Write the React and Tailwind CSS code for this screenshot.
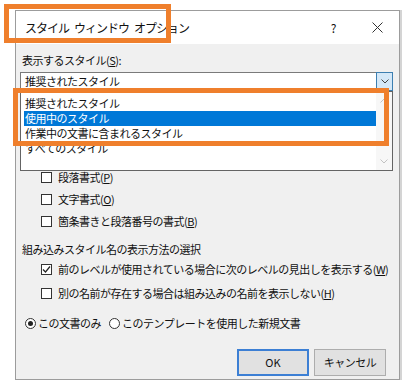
import React from "react";

const FONT = { fontFamily: '"Noto Sans CJK JP", "Noto Sans", sans-serif' };

const LIST_ITEMS = [
  { label: "推奨されたスタイル" },
  { label: "使用中のスタイル", selected: true },
  { label: "作業中の文書に含まれるスタイル" },
  { label: "すべてのスタイル" },
];

function Box({ checked }) {
  return (
    <span className="w-[11px] h-[11px] border border-[#333] bg-white flex items-center justify-center shrink-0">
      {checked && (
        <svg width="9" height="9" viewBox="0 0 9 9">
          <path d="M1 4.5 L3.5 7 L8 1.5" fill="none" stroke="#222" strokeWidth="1.2" />
        </svg>
      )}
    </span>
  );
}

function CheckRow({ checked, children, h = "h-[22px]" }) {
  return (
    <div className={`${h} flex items-center pl-[25px] gap-[6px]`}>
      <Box checked={checked} />
      <span className="whitespace-nowrap">{children}</span>
    </div>
  );
}

function Radio({ on, children }) {
  return (
    <div className="flex items-center gap-[2px]">
      <span className="w-[11px] h-[11px] rounded-full border border-[#333] bg-white flex items-center justify-center">
        {on && <span className="w-[5px] h-[5px] rounded-full bg-[#222]" />}
      </span>
      <span className="whitespace-nowrap">{children}</span>
    </div>
  );
}

export default function App() {
  return (
    <div className="relative w-[408px] h-[383px] bg-white overflow-hidden text-[11px] text-[#111] tracking-[-0.5px]" style={FONT}>
      {/* dialog */}
      <div className="ml-[15px] mt-[10px] w-[385px] border border-[#9c9c9c] shadow-[2px_0_0_#d4d4d4]">
        {/* title bar */}
        <div className="h-[33px] bg-white flex items-center pl-[9px] pr-[16px]">
          <span className="text-[12px] tracking-[-1px] flex gap-[5px]">
            <span>スタイル</span>
            <span>ウィンドウ</span>
            <span>オプション</span>
          </span>
          <span className="ml-auto mr-[36px] text-[12px]">?</span>
          <svg width="11" height="11" viewBox="0 0 11 11">
            <path d="M0.5 0.5 L10.5 10.5 M10.5 0.5 L0.5 10.5" stroke="#333" strokeWidth="1" />
          </svg>
        </div>

        {/* body */}
        <div className="relative bg-[#f0f0f0] pb-[3px]">
          <div className="pt-[8px] pl-[6px] h-[24px] leading-4">
            表示するスタイル(<span className="underline">S</span>):
          </div>

          {/* combo */}
          <div className="mt-[4px] ml-[4px] w-[373px] h-[19px] border border-[#7a7a7a] bg-white flex items-center">
            <span className="pl-[4px] flex-1">推奨されたスタイル</span>
            <span className="w-[17px] h-[19px] -mr-px border border-[#3c7fb1] bg-[#d4e8f8] flex items-center justify-center">
              <svg width="8" height="5" viewBox="0 0 8 5">
                <path d="M0.5 0.5 L4 4 L7.5 0.5" fill="none" stroke="#444" strokeWidth="1" />
              </svg>
            </span>
          </div>

          {/* dropdown list over the rest */}
          <div className="absolute left-[4px] top-[47px] w-[373px] h-[80px] border border-[#646464] bg-white flex z-10">
            <div className="flex-1 pt-[4px] pl-[3px]">
              {LIST_ITEMS.map((item, i) => (
                <div
                  key={i}
                  className={`h-[15px] leading-[15px] pl-[1px] ${item.selected ? "bg-[#0078d7] text-white" : ""}`}
                >
                  {item.label}
                </div>
              ))}
            </div>
            <div className="w-[16px] bg-[#f7f7f7] flex flex-col items-center justify-between py-[6px]">
              <svg width="8" height="5" viewBox="0 0 8 5">
                <path d="M0.5 4.5 L4 1 L7.5 4.5" fill="none" stroke="#c2c2c2" strokeWidth="1" />
              </svg>
              <svg width="8" height="5" viewBox="0 0 8 5">
                <path d="M0.5 0.5 L4 4 L7.5 0.5" fill="none" stroke="#c2c2c2" strokeWidth="1" />
              </svg>
            </div>
          </div>

          <div className="mt-[75px]">
            <CheckRow>段落書式(<span className="underline">P</span>)</CheckRow>
            <CheckRow>文字書式(<span className="underline">O</span>)</CheckRow>
            <CheckRow>箇条書きと段落番号の書式(<span className="underline">B</span>)</CheckRow>
          </div>

          <div className="mt-[9px] h-4 leading-4 pl-[6px]">組み込みスタイル名の表示方法の選択</div>
          <CheckRow checked h="h-[24px]">
            前のレベルが使用されている場合に次のレベルの見出しを表示する(<span className="underline">W</span>)
          </CheckRow>
          <CheckRow h="h-[24px]">
            別の名前が存在する場合は組み込みの名前を表示しない(<span className="underline">H</span>)
          </CheckRow>

          <div className="mt-[10px] h-4 flex items-center gap-[8px] pl-[9px]">
            <Radio on>この文書のみ</Radio>
            <Radio>このテンプレートを使用した新規文書</Radio>
          </div>

          <div className="mt-[18px] flex justify-end gap-[5px] pr-[13px]">
            <button className="w-[72px] h-[27px] border-2 border-[#3c7fd4] bg-[#e1e1e1] tracking-normal">OK</button>
            <button className="w-[72px] h-[27px] border border-[#adadad] bg-[#e1e1e1]">キャンセル</button>
          </div>
        </div>
      </div>

      {/* highlight boxes */}
      <div className="absolute left-[4px] top-[4px] w-[167px] h-[39px] border-[5px] border-[#ef7f2c] z-20" />
      <div className="absolute left-[13px] top-[88px] w-[376px] h-[58px] border-[5px] border-[#ef7f2c] z-20" />
    </div>
  );
}
